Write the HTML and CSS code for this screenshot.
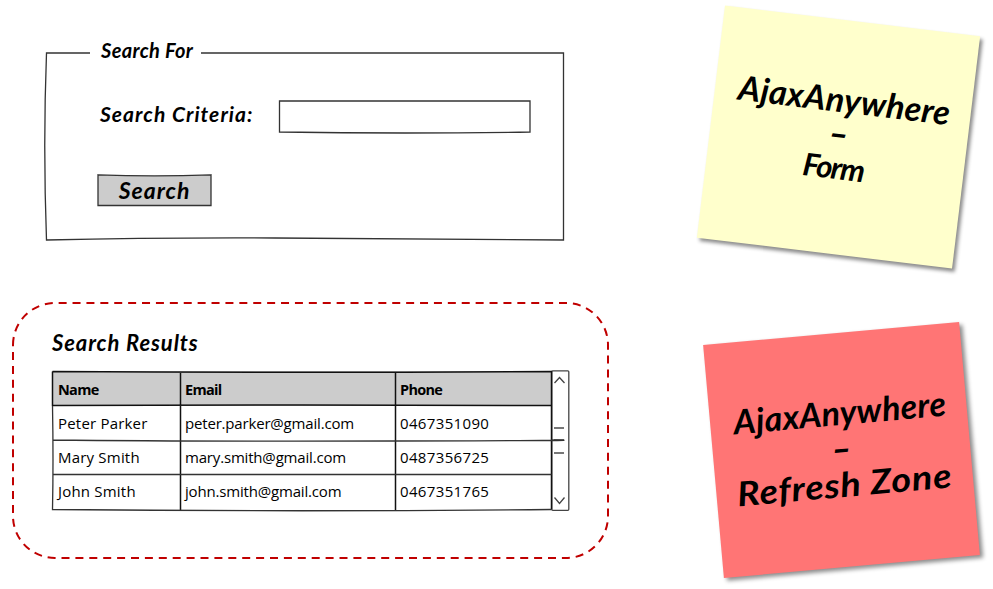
FILE: index.html
```html
<!DOCTYPE html>
<html lang="en">
<head>
<meta charset="utf-8">
<title>Search</title>
<link rel="stylesheet" href="styles.css">
</head>
<body>
<main class="board">
  <div class="wireframe">
    <form class="search">
      <svg class="outline" width="520" height="190" viewBox="0 0 520 190">
        <path d="M45 8H1.5Q-2 100 1.5 195Q110 192.500 230 193T518.500 195V8H156"/>
      </svg>
      <div class="legend hand">Search For</div>
      <div class="criteria">
        <label class="hand" for="q">Search Criteria:</label>
        <div class="field">
          <svg class="outline" width="253" height="35"><path d="M1.500 1H252V32Q127 34 1.500 32Z"/></svg>
          <input id="q" type="text">
        </div>
      </div>
      <button type="button" class="hand">
        <svg class="outline" width="115" height="33"><path d="M1 .8Q57 3 114 .8V31.500H1Z"/></svg>
        <span>Search</span>
      </button>
    </form>
    <section class="results">
      <svg class="outline zone" width="600" height="260"><path d="M2 43A42 42 0 0 1 44 1H555A42 42 0 0 1 597 43V214A42 42 0 0 1 555 256H44A42 42 0 0 1 2 214Z"/></svg>
      <h2 class="hand">Search Results</h2>
      <div class="listing">
        <div class="table">
          <svg class="outline" width="500" height="141">
            <path class="strong" d="M.5 1.500Q250 3 499.500 1.500V139.500M.5 35.500Q250 34.500 499.500 35.500M.5 1.500V36M128.500 2V140M343.500 2V140"/>
            <path d="M.5 36Q1.500 90 .5 139.500Q250 142 499.500 139.500M.5 70Q130 71.500 344 71T499.500 70M.5 104.500Q180 105.500 499.500 104.500"/>
          </svg>
          <div class="row head"><b class="name">Name</b><b>Email</b><b>Phone</b></div>
          <div class="row"><span class="name">Peter Parker</span><span class="email">peter.parker@gmail.com</span><span class="phone">0467351090</span></div>
          <div class="row"><span class="name">Mary Smith</span><span class="email">mary.smith@gmail.com</span><span class="phone">0487356725</span></div>
          <div class="row"><span class="name">John Smith</span><span class="email">john.smith@gmail.com</span><span class="phone">0467351765</span></div>
        </div>
        <svg class="scroll" width="19" height="141">
          <rect x=".8" y=".8" width="17" height="139.500" rx="1"/>
          <path d="M3.500 13L8.500 7.500L13.500 13M3.500 127.500L8.500 133.500L13.500 127.500"/>
          <path class="grip" d="M3 58H13M3 70H13M3 83H13"/>
        </svg>
      </div>
    </section>
  </div>
  <aside class="notes">
    <div class="note yellow hand"><p class="brand">AjaxAnywhere</p><p class="dash">-</p><p class="form-word">Form</p></div>
    <div class="note red hand"><p class="brand">AjaxAnywhere</p><p class="dash">-</p><p class="zone-word">Refresh Zone</p></div>
  </aside>
</main>
</body>
</html>
```
FILE: styles.css
```css
* { box-sizing: border-box; }
body { margin: 0; background: #fff; color: #000; }
p, h2 { margin: 0; }
.board { width: 993px; height: 589px; display: grid; grid-template-columns: 612px 1fr; overflow: hidden; }
.hand { font-family: Lato, "Open Sans", sans-serif; font-style: italic; font-weight: 700; }
.outline { position: absolute; left: 0; top: 0; overflow: visible; fill: none; stroke: #333; stroke-width: 1.3; pointer-events: none; }

.search { position: relative; height: 256px; margin: 0 0 0 45px; padding: 38px 0 0 56px; }
.search > .outline { top: 45px; }
.legend { font-size: 20px; line-height: 24px; letter-spacing: .35px; }
.criteria { display: flex; align-items: center; height: 34px; margin-top: 38px; }
.criteria label { width: 178px; margin-left: -1px; font-size: 21px; line-height: 26px; letter-spacing: 1.050px; padding-bottom: 7px; }
.field { position: relative; width: 253px; height: 34px; }
.field input { position: relative; width: 100%; height: 100%; border: 0; background: transparent; padding: 0 8px; font: 16px "Open Sans", sans-serif; }
button { position: relative; display: block; width: 115px; height: 33px; margin: 40px 0 0 -4px; padding: 0; border: 0; background: none; color: #000; font-size: 23px; line-height: 31px; letter-spacing: 1px; }
button .outline { fill: #ccc; }
button span { position: relative; }

.results { position: relative; width: 600px; height: 260px; margin: 46px 0 0 11px; padding: 28px 0 0 41px; }
.zone { stroke: #c00000; stroke-width: 2; stroke-dasharray: 8 5.900; }
h2.hand { position: relative; font-size: 22px; line-height: 26px; letter-spacing: .9px; }
.listing { display: flex; margin-top: 14px; }
.table { position: relative; width: 499px; font: 15px/34px "Open Sans", sans-serif; padding-top: 1px; }
.row { display: grid; grid-template-columns: 128px 215px 156px; height: 34px; }
.row > * { position: relative; padding: 0 0 0 5px; white-space: nowrap; }
.row > .name { padding-left: 6px; letter-spacing: .2px; }
.row > .email { letter-spacing: -.18px; }
.row > .phone { letter-spacing: .35px; }
.head { background: #ccc; height: 35px; padding-top: 2px; font-size: 14.500px; }
.head > *, .row.head > .name { letter-spacing: -.7px; }
.strong { stroke: #111; stroke-width: 1.500; }
.scroll { fill: none; stroke: #444; stroke-width: 1.300; }
.grip { stroke: #777; stroke-width: 2; }

.notes { display: flex; flex-direction: column; padding: 20px 0 0 98px; }
.note { width: 257px; height: 234px; text-align: center; font-size: 34px; line-height: 34px; box-shadow: 3px 3px 4px rgba(0,0,0,.45); }
.brand { letter-spacing: .3px; padding-left: 3px; }
.dash { transform: scaleX(1.6); }
.yellow { background: #ffc; transform: rotate(6.900deg); padding-top: 62px; }
.red { background: #ff7575; transform: rotate(-5.100deg); margin: 79px 0 0 3px; padding-top: 61px; line-height: 36px; }
.form-word { font-size: 31px; letter-spacing: -1.500px; padding-right: 3px; }
.zone-word { letter-spacing: .7px; transform: scaleX(1.110); }
```
